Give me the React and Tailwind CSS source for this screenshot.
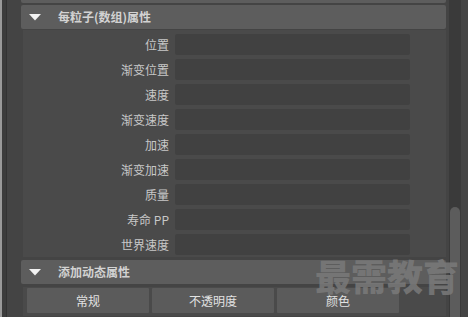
const rows = ['位置', '渐变位置', '速度', '渐变速度', '加速', '渐变加速', '质量', '寿命 PP', '世界速度']

function Triangle() {
  return (
    <svg width="12" height="7" viewBox="0 0 12 7" className="shrink-0">
      <polygon points="0,0 12,0 6,6.5" fill="#f2f2f2" />
    </svg>
  )
}

function SectionHeader({ title }) {
  return (
    <div className="flex h-[24px] items-center rounded-[2px] bg-[#5d5d5d] pl-[8px]">
      <Triangle />
      <span className="ml-[17px] text-[12px] font-semibold text-[#d2d2d2]">{title}</span>
    </div>
  )
}

export default function App() {
  return (
    <div
      className="relative flex h-[317px] w-[468px] overflow-hidden bg-[#444444]"
      style={{ fontFamily: '"Noto Sans CJK SC", "Noto Sans", sans-serif' }}
    >
      <div className="flex w-[7px] shrink-0">
        <div className="w-[2px] bg-[#9a9a9a]" />
        <div className="w-[4px] bg-[#3c3c3c]" />
        <div className="w-[1px] bg-[#333333]" />
      </div>

      <div className="flex flex-1 flex-col pl-[14px] pr-[3px]">
        <div className="h-[3px] rounded-b-[2px] bg-[#5d5d5d]" />
        <div className="mt-[2px]">
          <SectionHeader title="每粒子(数组)属性" />
        </div>
        <div className="ml-[2px] mt-[1px] flex flex-col gap-[4px] bg-[#4a4a4a] pb-[2px] pt-[4px]">
          {rows.map((r) => (
            <div key={r} className="flex h-[21px] items-center">
              <span className="w-[146px] text-right text-[12px] text-[#c8c8c8]">{r}</span>
              <div className="ml-[6px] h-[21px] w-[235px] rounded-[2px] bg-[#414141]" />
            </div>
          ))}
        </div>
        <div className="mt-[3px]">
          <SectionHeader title="添加动态属性" />
        </div>
        <div className="ml-[2px] mt-[3px] flex gap-[3px] bg-[#4a4a4a] pl-[4px] pt-[1px] pb-[3px]">
          {['常规', '不透明度', '颜色'].map((b) => (
            <div
              key={b}
              className="flex h-[25px] w-[122px] items-center justify-center rounded-[1px] bg-[#5b5b5b] text-[12px] leading-[16px] text-[#e2e2e2]"
            >
              {b}
            </div>
          ))}
        </div>
      </div>

      <div className="relative w-[19px] shrink-0">
        <div className="absolute left-0 top-0 h-full w-[12px] bg-[#3a3a3a]" />
        <div className="absolute left-[1px] top-[207px] h-[120px] w-[10px] rounded-t-[5px] bg-[#5c5c5c]" />
      </div>

      <div className="pointer-events-none absolute left-[315px] top-[257px] text-[36px] font-black leading-none text-[#7a7a7a]/85">
        最需教育
      </div>
    </div>
  )
}
